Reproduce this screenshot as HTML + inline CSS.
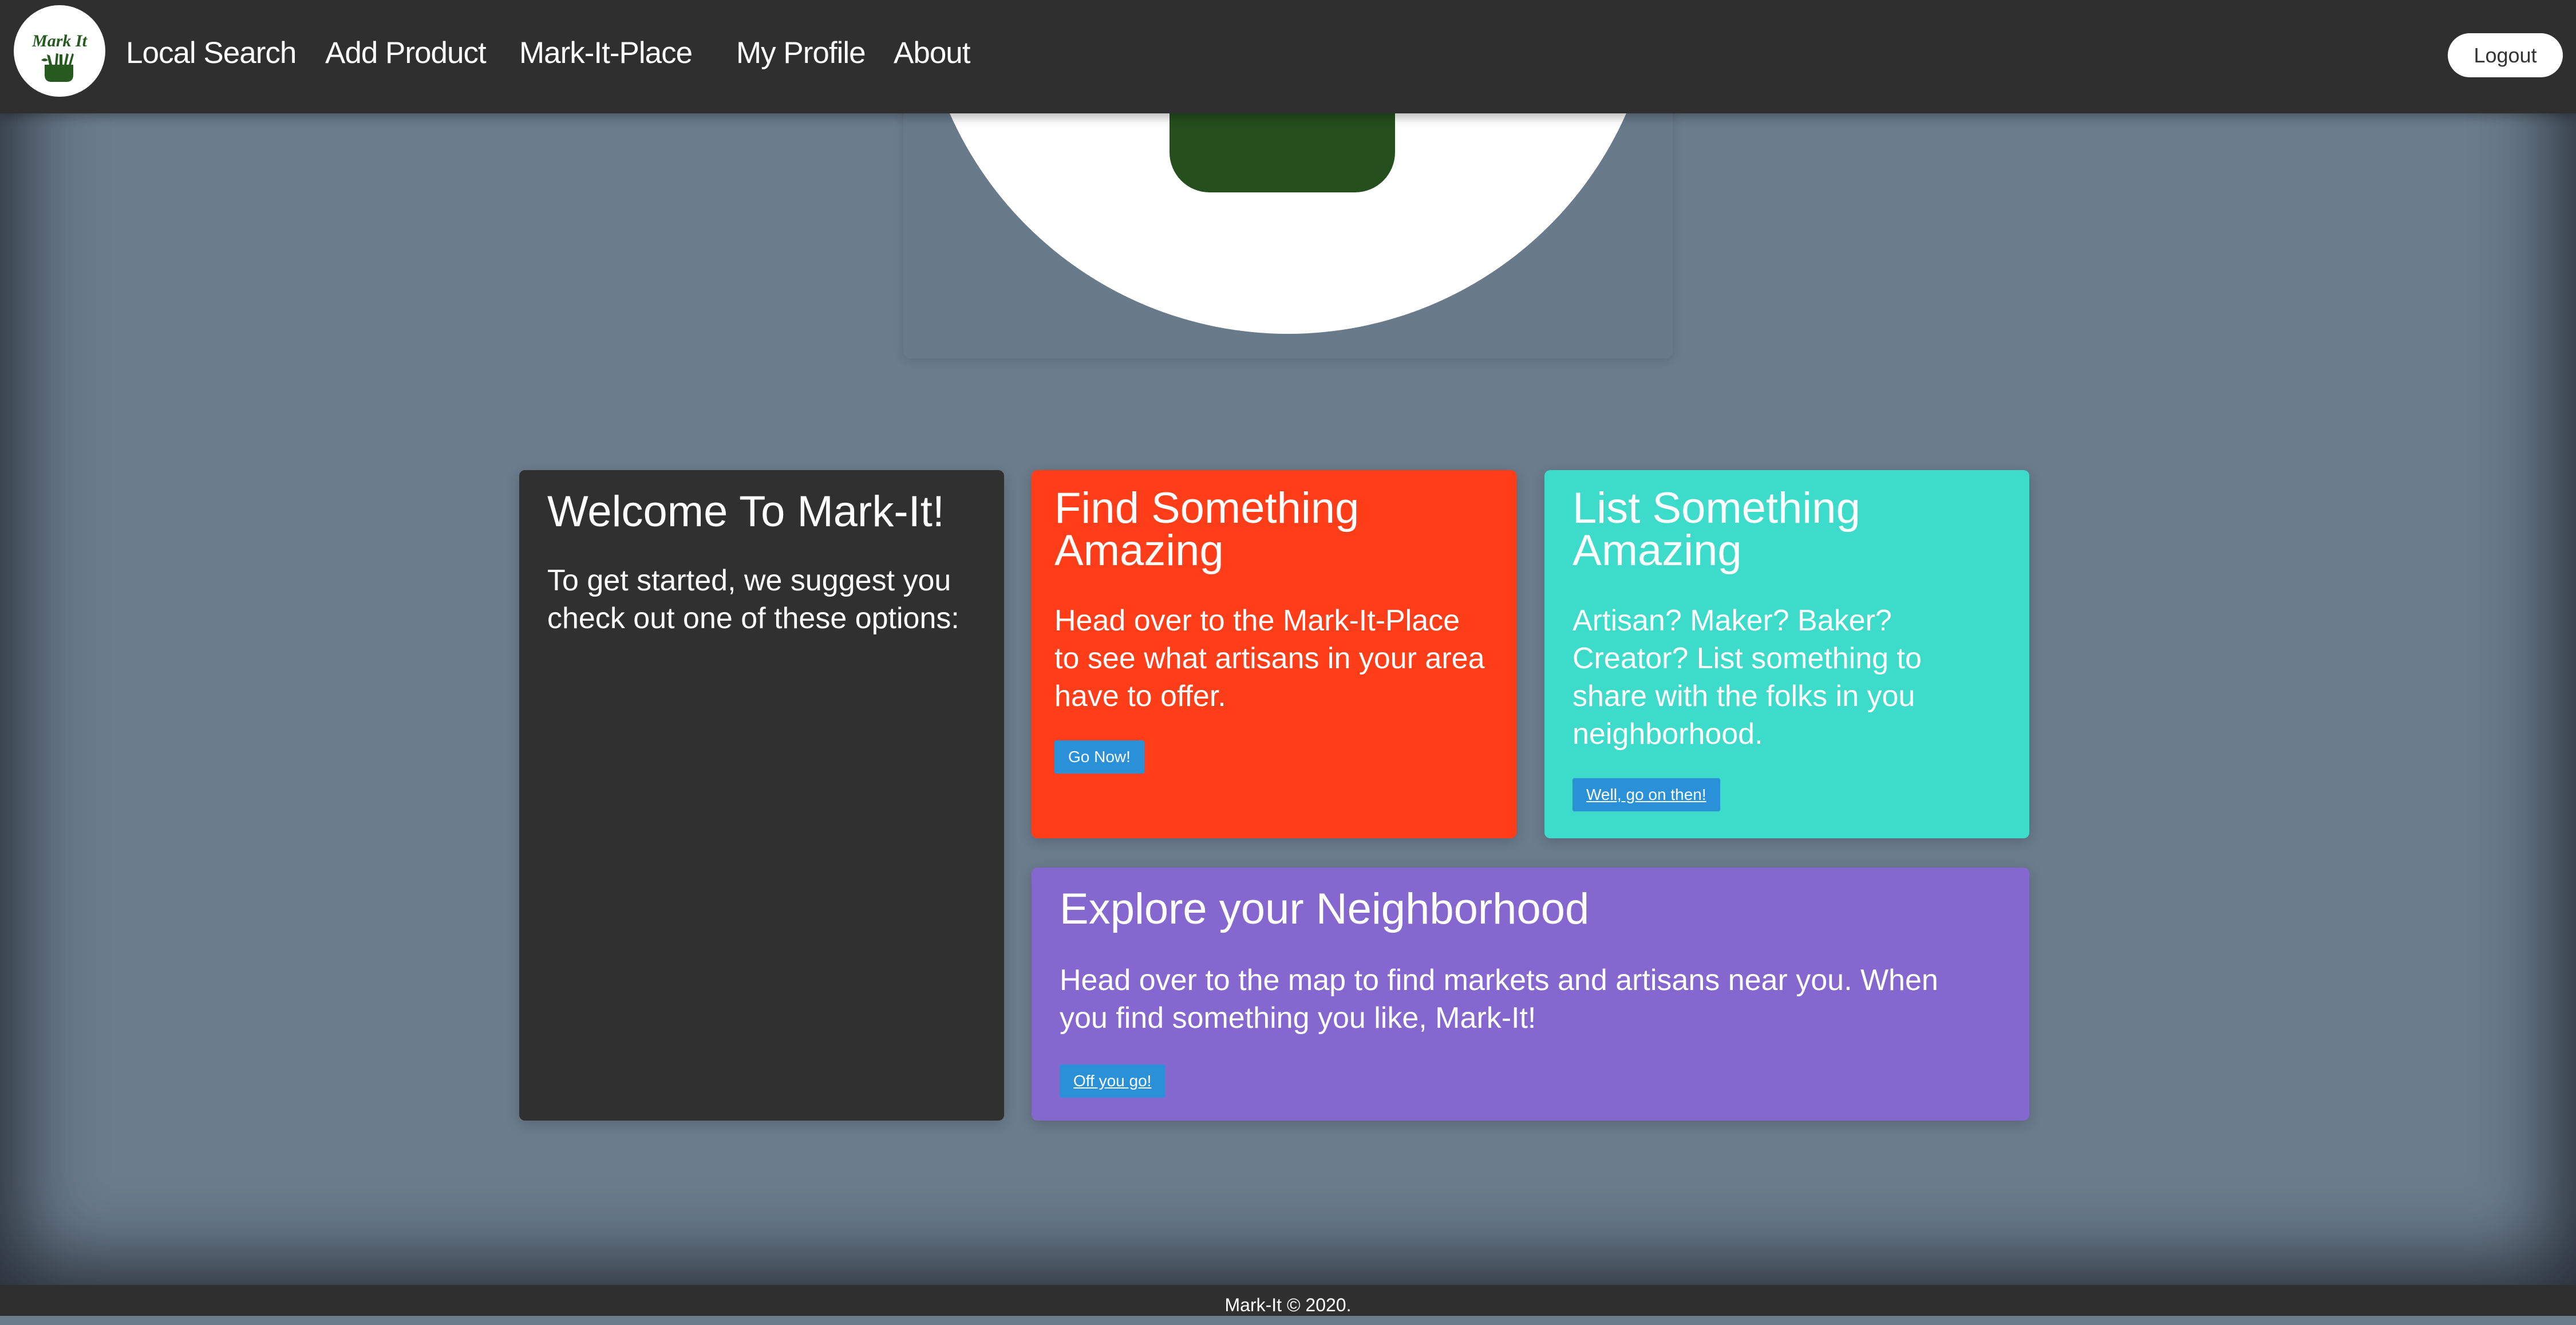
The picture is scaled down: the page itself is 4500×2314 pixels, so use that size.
<!DOCTYPE html>
<html><head><meta charset="utf-8"><style>
*{margin:0;padding:0;box-sizing:border-box}
body{width:4500px;height:2298px;overflow:hidden;background:#6b7c8c;font-family:"Liberation Sans",sans-serif;color:#fff;position:relative}
.vig{position:absolute;left:0;top:0;width:4500px;height:2244px;box-shadow:inset 0 0 260px 40px rgba(20,25,32,.75)}
.nav{position:absolute;left:0;top:0;width:4500px;height:198px;background:#2f2f2f;box-shadow:0 6px 18px rgba(0,0,0,.3);z-index:5}
.nav a{position:absolute;top:62px;font-size:53px;color:#fff;text-decoration:none;letter-spacing:-1px}
.logout{position:absolute;left:4276px;top:58px;width:201px;height:77px;background:#fff;border-radius:39px;color:#333;font-size:36px;text-align:center;line-height:77px}
.card{position:absolute;border-radius:10px;box-shadow:0 6px 24px rgba(0,0,0,.18);padding:0 49px}
.card h2{font-weight:normal;font-size:76px;line-height:74px;white-space:nowrap}
.card p{font-size:52px;line-height:66px;white-space:nowrap}
.btn{display:inline-block;background:#2a90d8;color:#fff;font-size:28px;line-height:58px;padding:0 24px;border-radius:3px}
.u{text-decoration:underline}
.foot{position:absolute;left:0;top:2244px;width:4500px;height:54px;background:#2f2f2f;text-align:center;font-size:32px;line-height:70px}
</style></head><body>
<div class="vig"></div>
<div style="position:absolute;left:1578px;top:120px;width:1344px;height:506px;border-radius:12px;background:#697a8a;box-shadow:0 4px 18px rgba(0,0,0,.12);overflow:hidden">
 <div style="position:absolute;left:26px;top:-829px;width:1292px;height:1292px;border-radius:50%;background:#fff"></div>
 <div style="position:absolute;left:465px;top:-100px;width:394px;height:316px;background:#254f1d;border-radius:0 0 70px 70px"></div>
</div>
<div class="nav">
 <svg style="position:absolute;left:24px;top:9px" width="160" height="160" viewBox="0 0 160 160">
  <circle cx="80" cy="80" r="80" fill="#fff"/>
  <text x="80" y="72" text-anchor="middle" font-family="Liberation Serif" font-style="italic" font-weight="bold" font-size="30" fill="#265a1f">Mark It</text>
  <path d="M54 104h50v18q0 12-12 12h-26q-12 0-12-12z" fill="#265a1f"/>
  <path d="M62 104l-4-18 5 2 4 16zM72 104l2-20 4 1-2 19zM80 104v-18h5v18zM88 104l4-20 4 2-4 18zM96 104l6-20 3 2-5 18zM60 96q-6-6-12 0 6 4 12 0z" fill="#265a1f"/>
 </svg>
 <a style="left:220px">Local Search</a>
 <a style="left:568px">Add Product</a>
 <a style="left:907px">Mark-It-Place</a>
 <a style="left:1286px">My Profile</a>
 <a style="left:1561px">About</a>
 <div class="logout">Logout</div>
</div>
<div class="card" style="left:907px;top:821px;width:847px;height:1136px;background:#303030">
 <h2 style="margin-top:36px">Welcome To Mark-It!</h2>
 <p style="margin-top:50px">To get started, we suggest you<br>check out one of these options:</p>
</div>
<div class="card" style="left:1802px;top:821px;width:847px;height:643px;background:#ff3d19;padding:0 40px">
 <h2 style="margin-top:30px">Find Something<br>Amazing</h2>
 <p style="margin-top:52px">Head over to the Mark-It-Place<br>to see what artisans in your area<br>have to offer.</p>
 <div class="btn" style="margin-top:44px">Go Now!</div>
</div>
<div class="card" style="left:2698px;top:821px;width:847px;height:643px;background:#3ddbc9">
 <h2 style="margin-top:30px">List Something<br>Amazing</h2>
 <p style="margin-top:52px">Artisan? Maker? Baker?<br>Creator? List something to<br>share with the folks in you<br>neighborhood.</p>
 <div class="btn u" style="margin-top:44px">Well, go on then!</div>
</div>
<div class="card" style="left:1802px;top:1515px;width:1743px;height:442px;background:#8468d0;padding:0 49px">
 <h2 style="margin-top:36px">Explore your Neighborhood</h2>
 <p style="margin-top:54px">Head over to the map to find markets and artisans near you. When<br>you find something you like, Mark-It!</p>
 <div class="btn u" style="margin-top:48px">Off you go!</div>
</div>
<div class="foot">Mark-It © 2020.</div>
</body></html>
